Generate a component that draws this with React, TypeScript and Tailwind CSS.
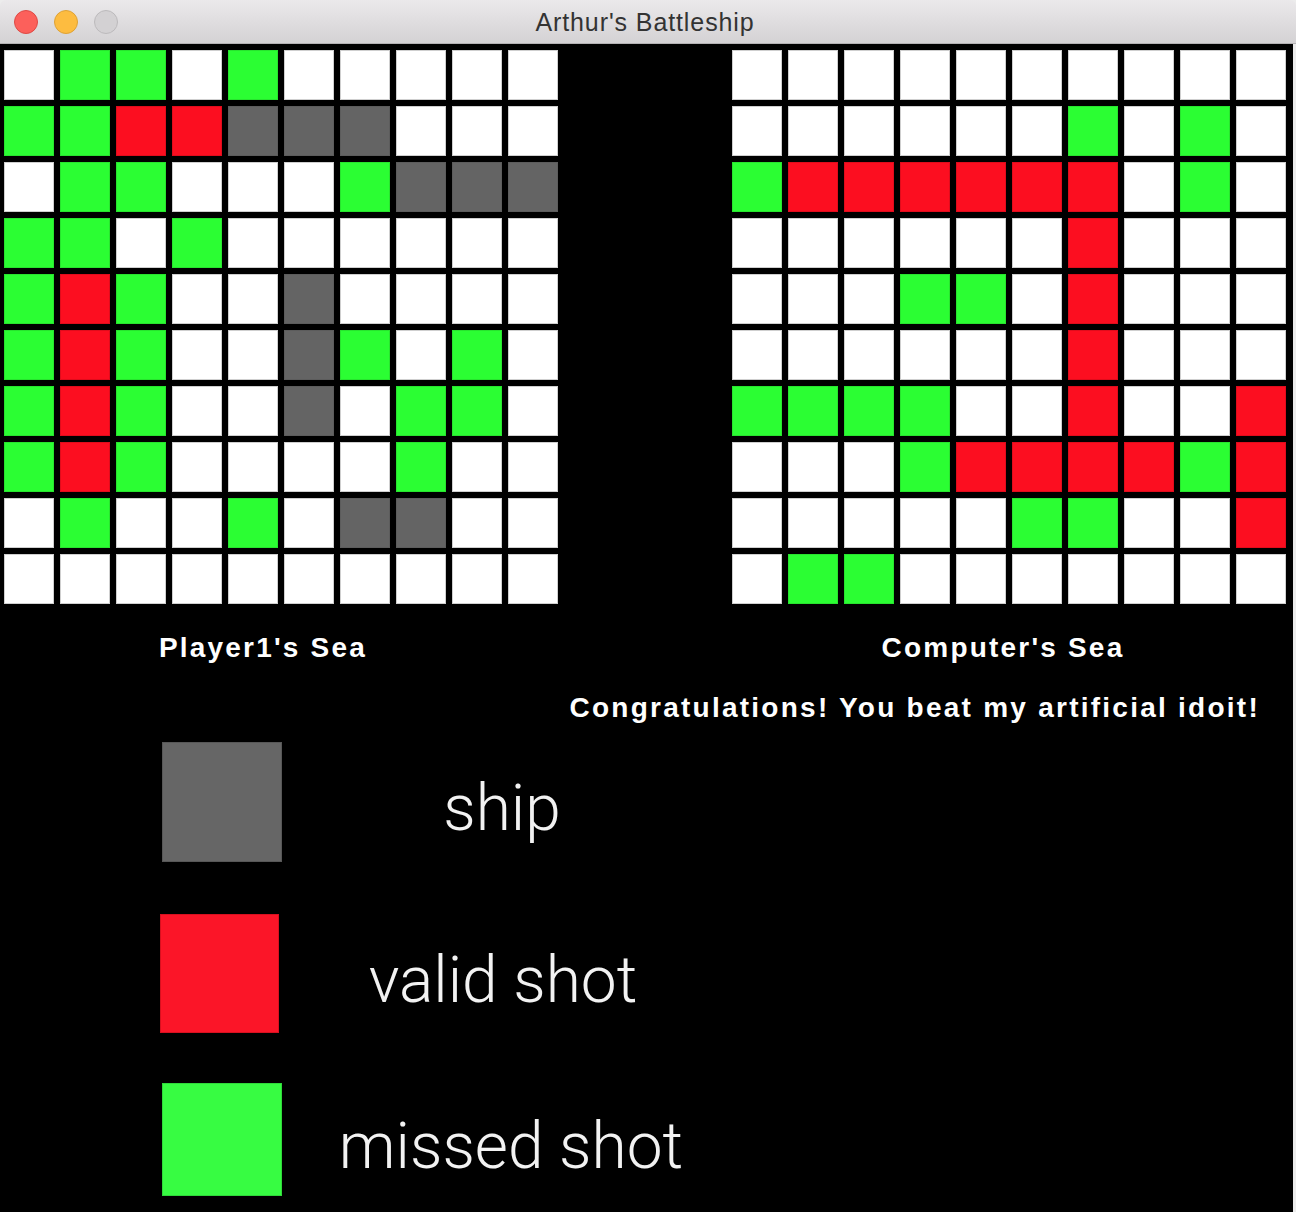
import React from 'react';

type Cell = 'W' | 'G' | 'R' | 'S';

// W = water, G = missed shot, R = valid shot, S = ship
const playerSea: string[] = [
  'WGGWGWWWWW',
  'GGRRSSSWWW',
  'WGGWWWGSSS',
  'GGWGWWWWWW',
  'GRGWWSWWWW',
  'GRGWWSGWGW',
  'GRGWWSWGGW',
  'GRGWWWWGWW',
  'WGWWGWSSWW',
  'WWWWWWWWWW',
];

const computerSea: string[] = [
  'WWWWWWWWWW',
  'WWWWWWGWGW',
  'GRRRRRRWGW',
  'WWWWWWRWWW',
  'WWWGGWRWWW',
  'WWWWWWRWWW',
  'GGGGWWRWWR',
  'WWWGRRRRGR',
  'WWWWWGGWWR',
  'WGGWWWWWWW',
];

const cellClass: Record<Cell, string> = {
  W: 'bg-white border-[#cfcfcf]',
  G: 'bg-[#2bfe33] border-[#27e42e]',
  R: 'bg-[#fc0e20] border-[#e00c1c]',
  S: 'bg-[#646464] border-[#5c5c5c]',
};

const Sea: React.FC<{ rows: string[] }> = ({ rows }) => (
  <div className="grid grid-cols-[repeat(10,50px)] grid-rows-[repeat(10,50px)] gap-[6px]">
    {rows.flatMap((row, r) =>
      row.split('').map((c, i) => (
        <div key={`${r}-${i}`} className={`border ${cellClass[c as Cell]}`} />
      ))
    )}
  </div>
);

const legend = [
  { label: 'ship', box: 'bg-[#666666] border-[#575757] w-[120px] h-[120px] ml-[162px]', text: 'w-[440px]', mt: 'mt-[20px]' },
  { label: 'valid shot', box: 'bg-[#fb1528] border-[#d8101f] w-[119px] h-[119px] ml-[160px]', text: 'w-[448px]', mt: 'mt-[52px]' },
  { label: 'missed shot', box: 'bg-[#37fc42] border-[#2fd93a] w-[120px] h-[113px] ml-[162px]', text: 'w-[458px]', mt: 'mt-[50px]' },
];

const App: React.FC = () => {
  return (
    <div className="w-[1296px] h-[1212px] bg-[#ececec] overflow-hidden">
      <div className="w-full h-full flex flex-col rounded-t-[6px] overflow-hidden">
        <div className="relative h-[44px] shrink-0 flex items-center justify-center bg-gradient-to-b from-[#ebe9eb] to-[#d4d2d4] border-b border-[#b4b2b4]">
          <div className="absolute left-[14px] top-[10px] flex gap-[16px]">
            <span className="w-[24px] h-[24px] rounded-full bg-[#fc605b] border border-[#de4a45]" />
            <span className="w-[24px] h-[24px] rounded-full bg-[#fdbc40] border border-[#dea236]" />
            <span className="w-[24px] h-[24px] rounded-full bg-[#d3d1d3] border border-[#bcbabc]" />
          </div>
          <span className="font-['Liberation_Sans',Arial,sans-serif] text-[25px] leading-none tracking-[0.9px] text-[#333333] ml-[-6px] mt-[2px]">
            Arthur's Battleship
          </span>
        </div>

        <div className="flex-1 w-[1293px] bg-black font-['Liberation_Sans',Arial,sans-serif] text-white">
          <div className="flex pt-[6px] pl-[4px] gap-[174px]">
            <div className="flex flex-col">
              <Sea rows={playerSea} />
              <div className="mt-[30px] pr-[36px] text-center text-[28px] leading-[28px] font-bold tracking-[2.2px]">
                Player1's Sea
              </div>
            </div>
            <div className="flex flex-col">
              <Sea rows={computerSea} />
              <div className="mt-[30px] pr-[12px] text-center text-[28px] leading-[28px] font-bold tracking-[2.2px]">
                Computer's Sea
              </div>
            </div>
          </div>

          <div className="mt-[32px] pr-[33px] flex justify-end text-[28px] leading-[28px] font-bold tracking-[2.25px]">
            Congratulations! You beat my artificial idoit!
          </div>

          {legend.map((l) => (
            <div key={l.label} className={`flex items-center ${l.mt}`}>
              <div className={`border ${l.box}`} />
              <div className={`${l.text} text-center pt-[14px] font-['Roboto','Liberation_Sans',sans-serif] font-light text-[64px] leading-[64px] text-[#f2f2f2]`}>
                {l.label}
              </div>
            </div>
          ))}
        </div>
      </div>
    </div>
  );
};

export default App;
